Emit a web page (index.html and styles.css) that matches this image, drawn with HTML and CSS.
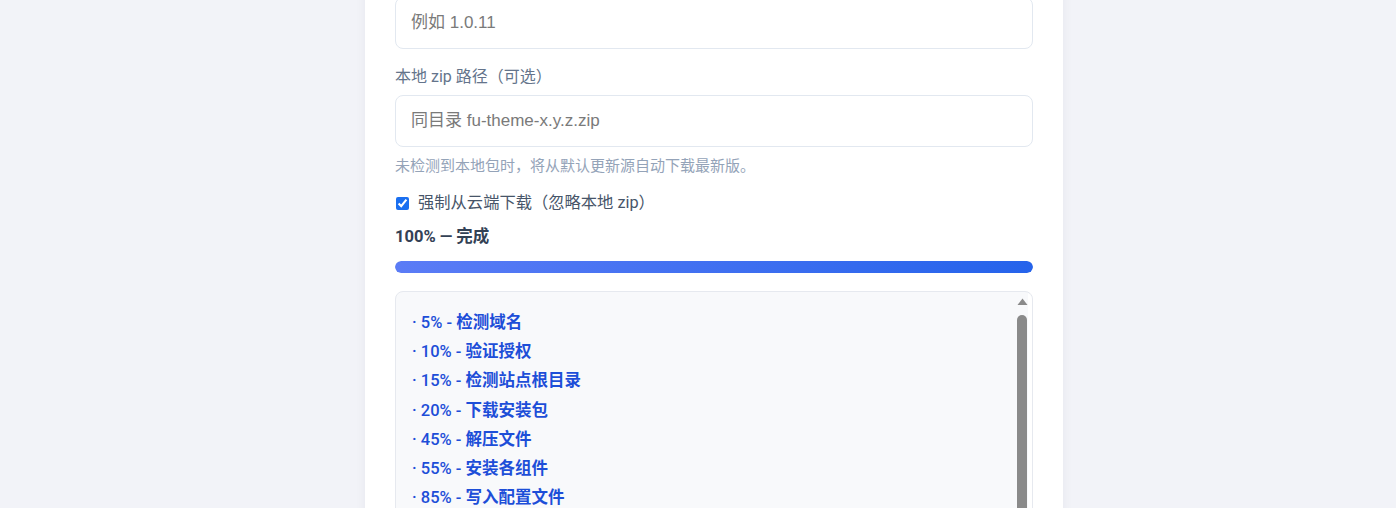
FILE: index.html
```html
<!DOCTYPE html>
<html lang="zh-CN">
<head>
    <meta charset="UTF-8">
    <meta name="viewport" content="width=device-width, initial-scale=1.0">
    <title>主题安装 - fu-theme</title>
    <link rel="stylesheet" href="styles.css">
</head>
<body>
    <div class="page">
        <div class="card">
            <label class="label" for="version">目标版本（可选）</label>
            <input type="text" id="version" class="input" placeholder="例如 1.0.11">

            <label class="label" for="zipPath">本地 zip 路径（可选）</label>
            <input type="text" id="zipPath" class="input" placeholder="同目录 fu-theme-x.y.z.zip">
            <div class="hint">未检测到本地包时，将从默认更新源自动下载最新版。</div>

            <label class="check">
                <input type="checkbox" id="forceRemote" checked>
                <span>强制从云端下载（忽略本地 zip）</span>
            </label>

            <div class="status">100% — 完成</div>
            <div class="bar"><div class="bar-fill" style="width: 100%"></div></div>

            <div class="log-wrap">
                <ul class="log">
                    <li>· 5% - <b>检测域名</b></li>
                    <li>· 10% - <b>验证授权</b></li>
                    <li>· 15% - <b>检测站点根目录</b></li>
                    <li>· 20% - <b>下载安装包</b></li>
                    <li>· 45% - <b>解压文件</b></li>
                    <li>· 55% - <b>安装各组件</b></li>
                    <li>· 85% - <b>写入配置文件</b></li>
                    <li>· 95% - <b>清理临时文件</b></li>
                    <li>· 100% - <b>完成</b></li>
                </ul>
                <!-- scrollbar drawn over the log, native one is hidden -->
                <div class="scrollbar">
                    <svg class="scroll-arrow" width="11" height="8" viewBox="0 0 11 8">
                        <path d="M5.5 0.5 L10.5 7 L0.5 7 Z" fill="#8a8a8a"/>
                    </svg>
                    <div class="scroll-thumb"></div>
                </div>
            </div>
        </div>
    </div>
</body>
</html>
```

FILE: styles.css
```css
body {
    margin: 0;
    background: #f2f3f8;
    font-family: Roboto, "Noto Sans CJK SC", sans-serif;
    overflow: hidden;
}
.page {
    padding-left: 32px;
}
.card {
    width: 638px;
    margin: -62px auto 0;
    padding: 30px;
    background: white;
    border-radius: 12px;
    box-shadow: 0 2px 12px rgba(30, 41, 59, 0.05);
    display: flex;
    flex-direction: column;
}
.label {
    font-size: 16px;
    line-height: 22px;
    color: #64748b;
    margin-bottom: 7px;
}
.input {
    box-sizing: border-box;
    height: 52px;
    padding: 0 15px;
    border: 1px solid #e2e8f0;
    border-radius: 8px;
    font-family: "Liberation Sans", "Noto Sans CJK SC", sans-serif;
    font-size: 17px;
    color: #1e293b;
    outline: none;
}
.input::placeholder {
    color: #7a7a7a;
}
.input + .label {
    margin-top: 17px;
}
.hint {
    margin-top: 9px;
    font-size: 15px;
    line-height: 20px;
    color: #94a3b8;
}
.check {
    display: flex;
    align-items: center;
    gap: 9px;
    margin-top: 16px;
    font-size: 16.3px;
    line-height: 22px;
    color: #475569;
}
.check input {
    margin: 0 0 0 1px;
    width: 13px;
    height: 13px;
    accent-color: #1a6ff0;
}
.status {
    margin-top: 12px;
    font-size: 16.5px;
    line-height: 22px;
    font-weight: 700;
    color: #334155;
}
.bar {
    margin-top: 13px;
    height: 12px;
    border-radius: 6px;
    background: #e2e8f0;
    overflow: hidden;
}
.bar-fill {
    height: 100%;
    border-radius: 6px;
    background: linear-gradient(90deg, #5b7cf6, #2563eb);
}
.log-wrap {
    position: relative;
    margin-top: 18px;
    background: #f8f9fb;
    border: 1px solid #e6e9ef;
    border-radius: 8px;
}
.log {
    list-style: none;
    margin: 0;
    padding: 16px;
    height: 230px;
    overflow-y: auto;
    scrollbar-width: none;
    font-size: 16.5px;
    line-height: 29.2px;
    color: #1d4ed8;
    font-weight: 500;
}
.log b {
    font-weight: 700;
}
.scrollbar {
    position: absolute;
    top: 0;
    right: 0;
    bottom: 0;
    width: 15px;
    background: linear-gradient(90deg, transparent 11px, #ffffff 11px);
    border-radius: 0 8px 8px 0;
}
.scroll-arrow {
    display: block;
    margin: 6px 0 0 0;
}
.scroll-thumb {
    margin-top: 9px;
    width: 10px;
    height: 220px;
    border-radius: 5px;
    background: #8a8a8a;
}
```
